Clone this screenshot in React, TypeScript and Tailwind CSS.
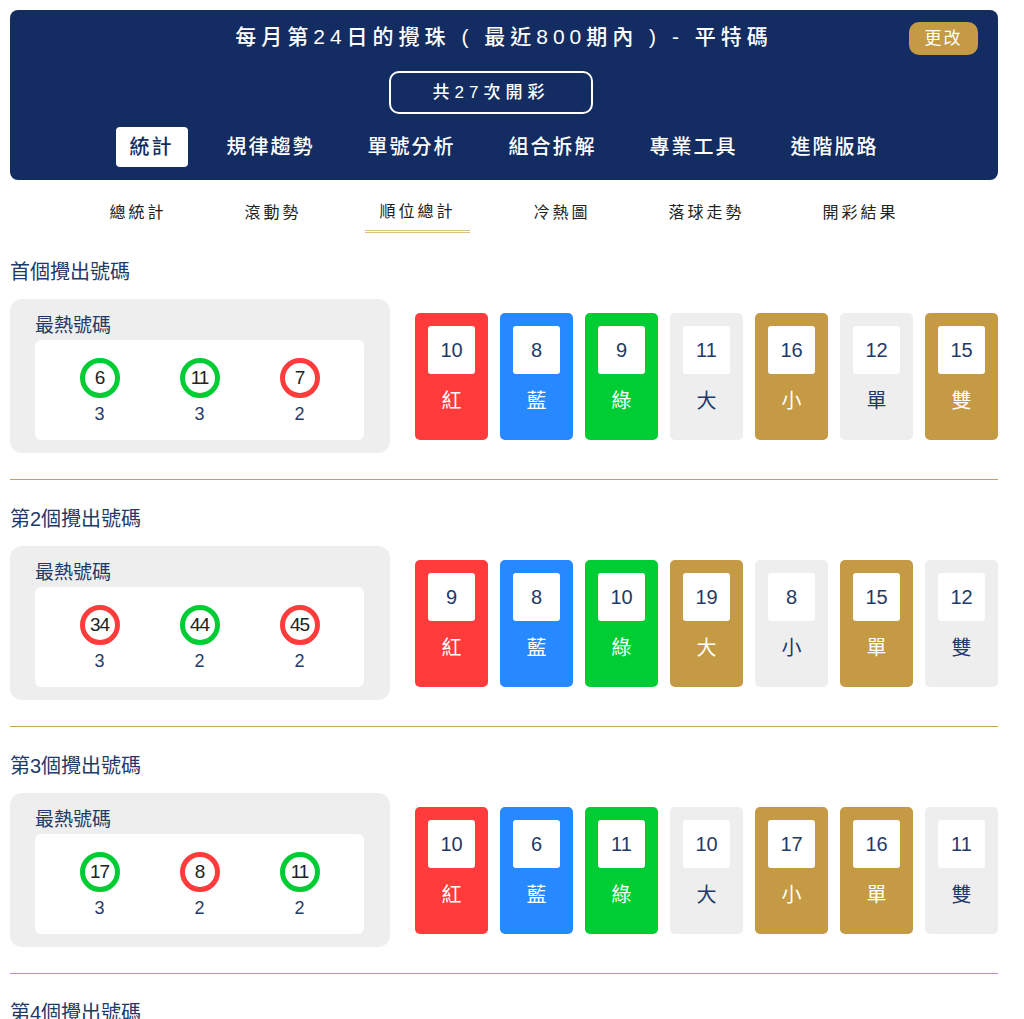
import React from 'react';

type Ball = { num: number; color: 'red' | 'green' | 'blue'; count: number };
type Card = { value: number; label: string; kind: 'red' | 'blue' | 'green' | 'gray' | 'gold' };
type Section = { title: string; balls: Ball[]; cards: Card[] };

const sections: Section[] = [
  {
    title: '首個攪出號碼',
    balls: [
      { num: 6, color: 'green', count: 3 },
      { num: 11, color: 'green', count: 3 },
      { num: 7, color: 'red', count: 2 },
    ],
    cards: [
      { value: 10, label: '紅', kind: 'red' },
      { value: 8, label: '藍', kind: 'blue' },
      { value: 9, label: '綠', kind: 'green' },
      { value: 11, label: '大', kind: 'gray' },
      { value: 16, label: '小', kind: 'gold' },
      { value: 12, label: '單', kind: 'gray' },
      { value: 15, label: '雙', kind: 'gold' },
    ],
  },
  {
    title: '第2個攪出號碼',
    balls: [
      { num: 34, color: 'red', count: 3 },
      { num: 44, color: 'green', count: 2 },
      { num: 45, color: 'red', count: 2 },
    ],
    cards: [
      { value: 9, label: '紅', kind: 'red' },
      { value: 8, label: '藍', kind: 'blue' },
      { value: 10, label: '綠', kind: 'green' },
      { value: 19, label: '大', kind: 'gold' },
      { value: 8, label: '小', kind: 'gray' },
      { value: 15, label: '單', kind: 'gold' },
      { value: 12, label: '雙', kind: 'gray' },
    ],
  },
  {
    title: '第3個攪出號碼',
    balls: [
      { num: 17, color: 'green', count: 3 },
      { num: 8, color: 'red', count: 2 },
      { num: 11, color: 'green', count: 2 },
    ],
    cards: [
      { value: 10, label: '紅', kind: 'red' },
      { value: 6, label: '藍', kind: 'blue' },
      { value: 11, label: '綠', kind: 'green' },
      { value: 10, label: '大', kind: 'gray' },
      { value: 17, label: '小', kind: 'gold' },
      { value: 16, label: '單', kind: 'gold' },
      { value: 11, label: '雙', kind: 'gray' },
    ],
  },
];

const ringColor: Record<string, string> = {
  red: 'border-[#ff3b3b]',
  green: 'border-[#00cc33]',
  blue: 'border-[#2789ff]',
};

const cardBg: Record<string, string> = {
  red: 'bg-[#ff3b3b] text-white',
  blue: 'bg-[#2789ff] text-white',
  green: 'bg-[#00cc33] text-white',
  gray: 'bg-[#eeeeee] text-[#1f3a68]',
  gold: 'bg-[#c49a45] text-white',
};

const mainTabs = ['統計', '規律趨勢', '單號分析', '組合拆解', '專業工具', '進階版路'];
const subTabs = ['總統計', '滾動勢', '順位總計', '冷熱圖', '落球走勢', '開彩結果'];

function StatSection({ s }: { s: Section }) {
  return (
    <div>
      <h2 className="text-[20px] leading-[28px] text-[#1f3a68] mt-[25px]">{s.title}</h2>
      <div className="flex items-center gap-[25px] mt-[13px]">
        <div className="w-[380px] h-[154px] bg-[#eeeeee] rounded-[12px] pl-[25px] pr-[26px] pt-[15px] shrink-0">
          <div className="text-[19px] leading-[24px] text-[#1f3a68]">最熱號碼</div>
          <div className="bg-white rounded-[6px] h-[100px] mt-[2px] flex justify-center pt-[18px]">
            {s.balls.map((b, i) => (
              <div key={i} className="w-[100px] flex flex-col items-center">
                <div className={`w-[40px] h-[40px] rounded-full border-[5px] ${ringColor[b.color]} flex items-center justify-center text-[19px] text-[#222] tracking-[-1px]`}>
                  {b.num}
                </div>
                <div className="text-[18px] leading-[22px] mt-[5px] text-[#1f3a68]">{b.count}</div>
              </div>
            ))}
          </div>
        </div>
        <div className="flex-1 flex justify-between">
          {s.cards.map((c, i) => (
            <div key={i} className={`w-[73px] h-[127px] rounded-[5px] ${cardBg[c.kind]} flex flex-col items-center pt-[13px]`}>
              <div className="w-[47px] h-[48px] bg-white rounded-[3px] flex items-center justify-center text-[20px] text-[#1f3a68]">
                {c.value}
              </div>
              <div className="text-[20px] leading-[28px] mt-[13px]">{c.label}</div>
            </div>
          ))}
        </div>
      </div>
      <div className="h-px bg-[#c8a05a] mt-[26px]" />
    </div>
  );
}

export default function App() {
  return (
    <div
      className="w-[988px] ml-[10px] pt-[10px] bg-white"
      style={{ fontFamily: '"Liberation Sans", "Noto Sans CJK TC", sans-serif' }}
    >
      <div className="bg-[#132c61] rounded-[8px] pt-[10px] pb-[13px] flex flex-col items-center">
        <div className="relative w-full h-[34px] flex items-center justify-center">
          <div className="text-white text-[21px] tracking-[5px] font-medium">每月第24日的攪珠 ( 最近800期內 ) - 平特碼</div>
          <button className="absolute right-[20px] top-[2px] w-[69px] h-[33px] rounded-[10px] bg-[#c49a45] text-white text-[17px] tracking-[2px]">
            更改
          </button>
        </div>
        <div className="mt-[17px] mr-[26px] w-[204px] h-[43px] border-2 border-white rounded-[10px] flex items-center justify-center text-white text-[17px] tracking-[5px] font-medium">
          共27次開彩
        </div>
        <div className="mt-[13px] flex gap-[25px]">
          {mainTabs.map((t, i) => (
            <div
              key={t}
              className={`h-[40px] px-[14px] flex items-center text-[20px] tracking-[2px] font-medium rounded-[4px] ${i === 0 ? 'bg-white text-[#132c61]' : 'text-white'}`}
            >
              {t}
            </div>
          ))}
        </div>
      </div>

      <div className="flex justify-center gap-[50px] mt-[13px]">
        {subTabs.map((t) => (
          <div
            key={t}
            className={`px-[14px] h-[40px] flex items-center text-[16px] tracking-[3px] text-[#222] ${t === '順位總計' ? 'border-b-[3px] border-double border-[#dcc084]' : ''}`}
          >
            {t}
          </div>
        ))}
      </div>

      <div>
        {sections.map((s, i) => (
          <StatSection key={i} s={s} />
        ))}
        <h2 className="text-[20px] leading-[28px] text-[#1f3a68] mt-[25px]">第4個攪出號碼</h2>
        <div className="h-[200px]" />
      </div>
    </div>
  );
}
